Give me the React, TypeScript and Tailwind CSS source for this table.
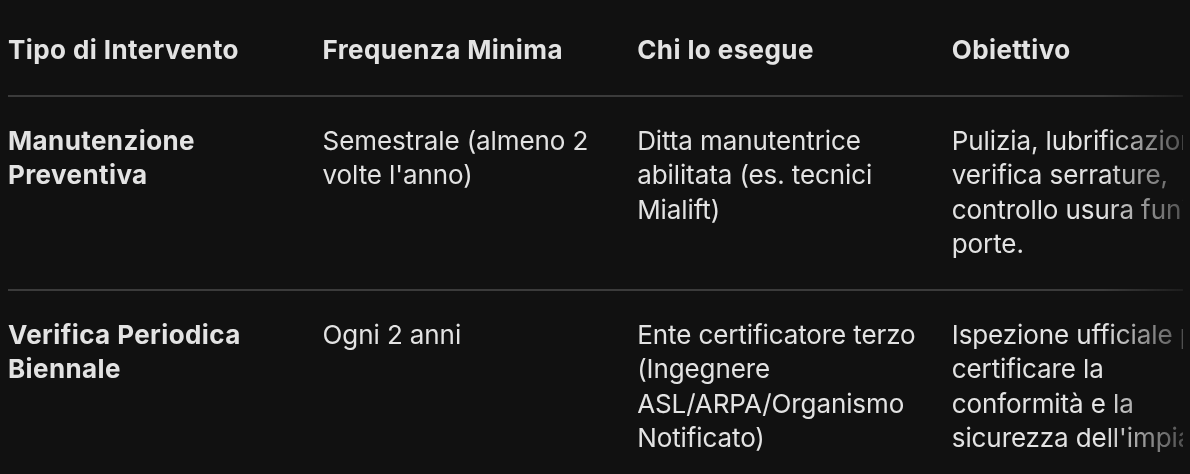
const headers = ['Tipo di Intervento', 'Frequenza Minima', 'Chi lo esegue', 'Obiettivo'];

const rows: string[][][] = [
  [
    ['Manutenzione', 'Preventiva'],
    ['Semestrale (almeno 2', "volte l'anno)"],
    ['Ditta manutentrice', 'abilitata (es. tecnici', 'Mialift)'],
    ['Pulizia, lubrificazione,', 'verifica serrature,', 'controllo usura funi e', 'porte.'],
  ],
  [
    ['Verifica Periodica', 'Biennale'],
    ['Ogni 2 anni'],
    ['Ente certificatore terzo', '(Ingegnere', 'ASL/ARPA/Organismo', 'Notificato)'],
    ['Ispezione ufficiale per', 'certificare la', 'conformità e la', "sicurezza dell'impianto."],
  ],
];

const App = () => {
  return (
    <div className="min-h-screen w-full bg-[#111111] text-[#e3e3e3] font-['Inter','Noto_Sans',sans-serif] text-[26px] leading-[34.5px] tracking-[-0.1px] overflow-hidden">
      <div className="ml-2 mr-[7px] pt-[6px] overflow-hidden [mask-image:linear-gradient(to_right,black_calc(100%-80px),rgba(0,0,0,0.3))]">
        <div className="w-[1260px]">
          {/* Header */}
          <div className="grid grid-cols-[314.6px_314.6px_314.6px_314.6px] border-b-2 border-[#3b3b3b]">
            {headers.map((h) => (
              <div key={h} className="py-[27px] pr-5 font-bold tracking-[0.4px]">
                {h}
              </div>
            ))}
          </div>

          {/* Rows */}
          {rows.map((row, i) => (
            <div key={i} className="grid grid-cols-[314.6px_314.6px_314.6px_314.6px] border-b-2 border-[#3b3b3b]">
              {row.map((cell, j) => (
                <div key={j} className={`py-[27px] pr-5 ${j === 0 ? 'font-bold tracking-[0.4px]' : ''}`}>
                  {cell.map((line) => (
                    <div key={line} className="whitespace-nowrap">{line}</div>
                  ))}
                </div>
              ))}
            </div>
          ))}
        </div>
      </div>
    </div>
  );
};

export default App;
